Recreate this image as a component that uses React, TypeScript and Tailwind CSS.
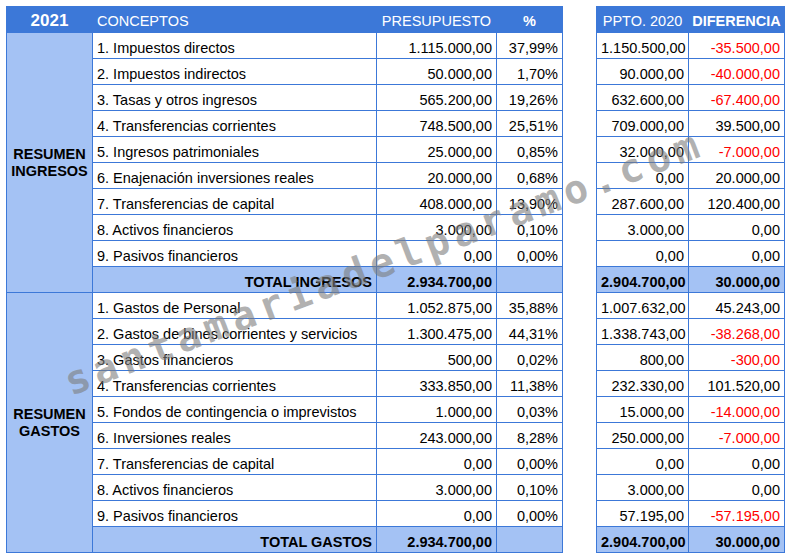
type Row = [string, string, string, string, string];

const ingresos: Row[] = [
  ["1. Impuestos directos", "1.115.000,00", "37,99%", "1.150.500,00", "-35.500,00"],
  ["2. Impuestos indirectos", "50.000,00", "1,70%", "90.000,00", "-40.000,00"],
  ["3. Tasas y otros ingresos", "565.200,00", "19,26%", "632.600,00", "-67.400,00"],
  ["4. Transferencias corrientes", "748.500,00", "25,51%", "709.000,00", "39.500,00"],
  ["5. Ingresos patrimoniales", "25.000,00", "0,85%", "32.000,00", "-7.000,00"],
  ["6. Enajenación inversiones reales", "20.000,00", "0,68%", "0,00", "20.000,00"],
  ["7. Transferencias de capital", "408.000,00", "13,90%", "287.600,00", "120.400,00"],
  ["8. Activos financieros", "3.000,00", "0,10%", "3.000,00", "0,00"],
  ["9. Pasivos financieros", "0,00", "0,00%", "0,00", "0,00"],
];

const gastos: Row[] = [
  ["1. Gastos de Personal", "1.052.875,00", "35,88%", "1.007.632,00", "45.243,00"],
  ["2. Gastos de bines corrientes y servicios", "1.300.475,00", "44,31%", "1.338.743,00", "-38.268,00"],
  ["3. Gastos financieros", "500,00", "0,02%", "800,00", "-300,00"],
  ["4. Transferencias corrientes", "333.850,00", "11,38%", "232.330,00", "101.520,00"],
  ["5. Fondos de contingencia o imprevistos", "1.000,00", "0,03%", "15.000,00", "-14.000,00"],
  ["6. Inversiones reales", "243.000,00", "8,28%", "250.000,00", "-7.000,00"],
  ["7. Transferencias de capital", "0,00", "0,00%", "0,00", "0,00"],
  ["8. Activos financieros", "3.000,00", "0,10%", "3.000,00", "0,00"],
  ["9. Pasivos financieros", "0,00", "0,00%", "57.195,00", "-57.195,00"],
];

const blocks = [
  { title: ["RESUMEN", "INGRESOS"], rows: ingresos, total: "TOTAL INGRESOS" },
  { title: ["RESUMEN", "GASTOS"], rows: gastos, total: "TOTAL GASTOS" },
];

// celda normal: 26px con el borde inferior, texto pegado abajo como en la hoja
const cell = "h-[26px] border-r border-b border-[#3c78d8] px-[4px] pt-[5px] leading-[20px] whitespace-nowrap overflow-hidden";
const head = "h-[26px] border-r border-b border-[#3c78d8] bg-[#3c78d8] text-white pt-[4px] leading-[20px] whitespace-nowrap";

export default function App() {
  return (
    <div
      className="relative h-[559px] w-[792px] overflow-hidden bg-white text-[14.5px] text-black"
      style={{ fontFamily: '"Liberation Sans", Arial, sans-serif' }}
    >
      <div className="flex items-start gap-[33px] pl-[6px] pt-[6px]">
        {/* Tabla principal */}
        <div className="grid grid-cols-[86px_284px_120px_66px] border-l border-t border-[#3c78d8]">
          <div className={`${head} pt-[3px] text-center text-[17px] font-bold`}>2021</div>
          <div className={`${head} px-[4px]`}>CONCEPTOS</div>
          <div className={`${head} text-center`}>PRESUPUESTO</div>
          <div className={`${head} text-center font-bold`}>%</div>

          {blocks.map((b) => (
            <Block key={b.total} title={b.title} rows={b.rows} total={b.total} />
          ))}
        </div>

        {/* Comparativa con 2020 */}
        <div className="grid grid-cols-[92px_96px] border-l border-t border-[#3c78d8]">
          <div className={`${head} text-center`}>PPTO. 2020</div>
          <div className={`${head} text-center font-bold`}>DIFERENCIA</div>
          {blocks.map((b) => (
            <CompareBlock key={b.total} rows={b.rows} />
          ))}
        </div>
      </div>

      {/* Marca de agua */}
      <div
        className="pointer-events-none absolute left-[384px] top-[262px] whitespace-nowrap text-[40px] font-bold leading-none tracking-[5.5px] text-[rgba(125,125,125,0.6)]"
        style={{
          fontFamily: '"DejaVu Sans Mono", "Liberation Mono", monospace',
          transform: "translate(-50%, -50%) rotate(-20.8deg)",
        }}
      >
        santamariadelparamo.com
      </div>
    </div>
  );
}

function Block({ title, rows, total }: { title: string[]; rows: Row[]; total: string }) {
  return (
    <>
      <div className="row-span-10 flex flex-col items-center justify-center border-r border-b border-[#3c78d8] bg-[#a4c2f4] text-center font-bold leading-[17px]">
        {title.map((t) => (
          <div key={t}>{t}</div>
        ))}
      </div>
      {rows.map((r) => (
        <RowCells key={r[0]} r={r} />
      ))}
      <div className={`${cell} bg-[#a4c2f4] text-right font-bold`}>{total}</div>
      <div className={`${cell} bg-[#a4c2f4] text-right font-bold`}>2.934.700,00</div>
      <div className={`${cell} bg-[#a4c2f4]`} />
    </>
  );
}

function RowCells({ r }: { r: Row }) {
  return (
    <>
      <div className={cell}>{r[0]}</div>
      <div className={`${cell} text-right`}>{r[1]}</div>
      <div className={`${cell} text-right`}>{r[2]}</div>
    </>
  );
}

function CompareBlock({ rows }: { rows: Row[] }) {
  return (
    <>
      {rows.map((r) => (
        <div key={r[0]} className="contents">
          <div className={`${cell} text-right`}>{r[3]}</div>
          <div className={`${cell} text-right ${r[4].startsWith("-") ? "text-[#ff0000]" : ""}`}>{r[4]}</div>
        </div>
      ))}
      <div className={`${cell} bg-[#a4c2f4] text-right font-bold`}>2.904.700,00</div>
      <div className={`${cell} bg-[#a4c2f4] text-right font-bold`}>30.000,00</div>
    </>
  );
}
